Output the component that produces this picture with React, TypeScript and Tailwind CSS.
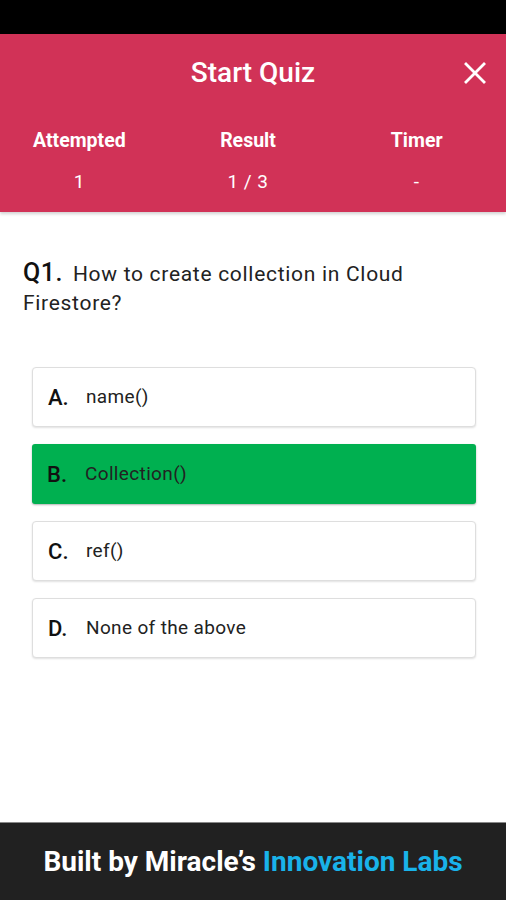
import React from 'react';

const options = [
  { key: 'A', text: 'name()', correct: false },
  { key: 'B', text: 'Collection()', correct: true },
  { key: 'C', text: 'ref()', correct: false },
  { key: 'D', text: 'None of the above', correct: false },
];

const CloseIcon: React.FC = () => (
  <svg width="24" height="24" viewBox="0 0 24 24" fill="none" stroke="white" strokeWidth="2.8" strokeLinecap="square">
    <path d="M3 3L21 21M21 3L3 21" />
  </svg>
);

const Stat: React.FC<{ label: string; value: string }> = ({ label, value }) => (
  <div className="flex flex-col items-center">
    <div className="text-[19.5px] font-bold leading-[22px]">{label}</div>
    <div className="text-[19px] leading-[22px] mt-[19px] tracking-[0.5px]">{value}</div>
  </div>
);

export default function App() {
  return (
    <div className="w-[506px] h-[900px] flex flex-col bg-white overflow-hidden" style={{ fontFamily: 'Roboto, "Noto Sans", sans-serif' }}>
      <div className="h-[34px] bg-black shrink-0" />

      <header className="bg-[#d13257] text-white shrink-0 h-[178px] shadow-[0_2px_3px_rgba(0,0,0,0.18)] relative z-10">
        <div className="relative h-[78px] flex items-center justify-center">
          <h1 className="text-[28px] font-medium">Start Quiz</h1>
          <button className="absolute right-[19px] top-[27px]">
            <CloseIcon />
          </button>
        </div>
        <div className="grid grid-cols-3 w-[506px] -ml-[5px] pt-[18px]">
          <Stat label="Attempted" value="1" />
          <Stat label="Result" value="1 / 3" />
          <Stat label="Timer" value="-" />
        </div>
      </header>

      <main className="flex-1 px-[23px] pt-[46px]">
        <p className="text-[21px] leading-[29px] text-[#222] tracking-[0.7px]">
          <span className="text-[25px] leading-[29px] font-medium text-[#111] mr-[10px] tracking-[0.5px]">Q1.</span>
          How to create collection in Cloud Firestore?
        </p>

        <div className="mt-[49px] ml-[9px] mr-[7px] flex flex-col gap-[17px]">
          {options.map(o => (
            <div
              key={o.key}
              className={
                o.correct
                  ? 'h-[60px] rounded-[3px] bg-[#00b050] flex items-center px-[15px] shadow-[0_1px_2px_rgba(0,0,0,0.3)]'
                  : 'h-[60px] rounded-[4px] bg-white border border-[#dedede] flex items-center px-[15px] shadow-[0_1px_2px_rgba(0,0,0,0.12)]'
              }
            >
              <span className="text-[22px] font-medium text-[#111] w-[38px]">{o.key}.</span>
              <span className="text-[19px] text-[#222] tracking-[0.35px]">{o.text}</span>
            </div>
          ))}
        </div>
      </main>

      <footer className="h-[78px] shrink-0 bg-[#212121] flex items-center justify-center border-t border-[#888]">
        <span className="text-[28px] font-bold text-white tracking-[0px]">
          Built by Miracle’s <span className="text-[#19b3ea]">Innovation Labs</span>
        </span>
      </footer>
    </div>
  );
}
